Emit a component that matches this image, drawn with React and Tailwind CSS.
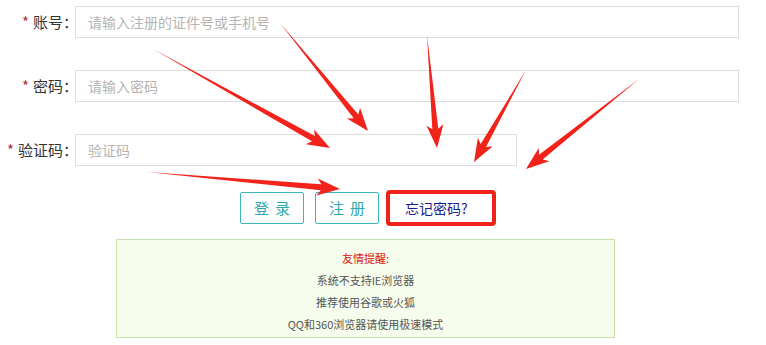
import React from 'react';

// ─── Annotation arrows (tail → tip) ──────────────────────────────
const ARROWS = [
  { tail: [153, 49], tip: [330, 148] },
  { tail: [280, 23], tip: [368, 131] },
  { tail: [427, 35], tip: [437, 148] },
  { tail: [526, 70], tip: [474, 162] },
  { tail: [639, 79], tip: [526, 169] },
  { tail: [147, 172], tip: [340, 189] },
];

const arrowPoints = ({ tail, tip }, shaft = 6, head = 17, headLen = 19) => {
  const dx = tip[0] - tail[0];
  const dy = tip[1] - tail[1];
  const len = Math.hypot(dx, dy);
  const ux = dx / len, uy = dy / len;
  const nx = -uy, ny = ux;
  const bx = tip[0] - ux * headLen, by = tip[1] - uy * headLen;
  const wx = bx - ux * 4, wy = by - uy * 4;
  const pts = [
    [tail[0], tail[1]],
    [bx + nx * shaft / 2, by + ny * shaft / 2],
    [wx + nx * head / 2, wy + ny * head / 2],
    [tip[0], tip[1]],
    [wx - nx * head / 2, wy - ny * head / 2],
    [bx - nx * shaft / 2, by - ny * shaft / 2],
  ];
  return pts.map(p => p.map(v => v.toFixed(1)).join(',')).join(' ');
};

const FONT = { fontFamily: '"Microsoft YaHei", "Noto Sans CJK SC", "Noto Sans", sans-serif' };

const Field = ({ label, placeholder, width = 'w-[664px]' }) => (
  <div className="flex items-center h-[32px]">
    <label className="w-[78px] -mr-[3px] text-right text-[15px] text-[#333] whitespace-nowrap">
      <span className="text-[#b0324a] mr-[4px]">*</span>
      {label}：
    </label>
    <input
      placeholder={placeholder}
      className={`${width} h-[32px] border border-[#dcdcdc] px-[12px] text-[14px] outline-none placeholder:text-[#b4b4b4]`}
      style={FONT}
    />
  </div>
);

export default function App() {
  return (
    <div className="relative w-[766px] h-[345px] bg-white overflow-hidden" style={FONT}>
      {/* ── Form ── */}
      <div className="flex flex-col gap-[32px] pt-[6px]">
        <Field label="账号" placeholder="请输入注册的证件号或手机号" />
        <Field label="密码" placeholder="请输入密码" />
        <Field label="验证码" placeholder="验证码" width="w-[442px]" />
      </div>

      {/* ── Buttons ── */}
      <div className="flex items-center mt-[24px] ml-[240px] h-[36px]">
        <button className="w-[64px] h-[32px] border border-[#3fb4b8] rounded-[2px] text-[#2aa9ae] text-[15px] tracking-[6px] pl-[6px]">
          登录
        </button>
        <button className="w-[64px] h-[32px] ml-[11px] border border-[#3fb4b8] rounded-[2px] text-[#2aa9ae] text-[15px] tracking-[6px] pl-[6px]">
          注册
        </button>
        <div className="w-[110px] h-[36px] ml-[7px] border-[4px] border-[#f0201a] rounded-[4px] flex items-center pl-[15px]">
          <span className="text-[14px] text-[#1c1c8e]">忘记密码?</span>
        </div>
      </div>

      {/* ── Notice ── */}
      <div className="ml-[116px] mt-[13px] w-[499px] h-[99px] border border-[#c8e2ad] bg-[#f6fdec] flex flex-col items-center pt-[7px] text-[11px] leading-[22px] text-[#555]">
        <p className="text-[#e01010]">友情提醒:</p>
        <p>系统不支持IE浏览器</p>
        <p>推荐使用谷歌或火狐</p>
        <p>QQ和360浏览器请使用极速模式</p>
      </div>

      {/* ── Annotation arrows ── */}
      <svg className="absolute inset-0 pointer-events-none" width="766" height="345" viewBox="0 0 766 345">
        {ARROWS.map((a, i) => (
          <polygon key={i} points={arrowPoints(a)} fill="#f2231a" />
        ))}
      </svg>
    </div>
  );
}
